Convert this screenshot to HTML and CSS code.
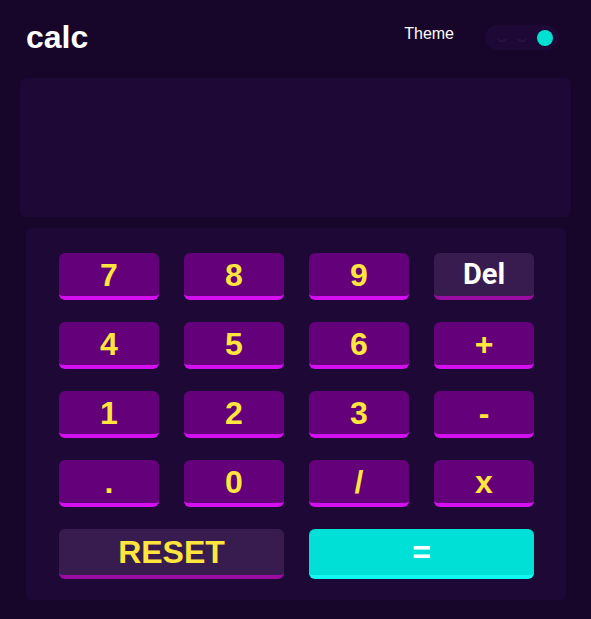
FILE: index.html
```html
<!DOCTYPE html>
<html lang="en">
<head>
<meta charset="utf-8">
<title>calc</title>
<link rel="stylesheet" href="styles.css">
</head>
<body>
<div class="app">
  <header class="header">
    <h1 class="logo">calc</h1>
    <div class="theme">
      <span class="theme-label">Theme</span>
      <div class="toggle">
        <svg class="marks" width="40" height="6" viewBox="0 0 40 6">
          <path d="M1 1 Q5 6 9 1 M21 1 Q25 6 29 1" fill="none" stroke="#35184f" stroke-width="1"/>
        </svg>
        <span class="knob"></span>
      </div>
    </div>
  </header>
  <div class="screen"></div>
  <div class="keypad">
    <button class="key">7</button>
    <button class="key">8</button>
    <button class="key">9</button>
    <button class="key key-alt">Del</button>
    <button class="key">4</button>
    <button class="key">5</button>
    <button class="key">6</button>
    <button class="key">+</button>
    <button class="key">1</button>
    <button class="key">2</button>
    <button class="key">3</button>
    <button class="key">-</button>
    <button class="key">.</button>
    <button class="key">0</button>
    <button class="key">/</button>
    <button class="key">x</button>
    <button class="key key-alt key-reset">RESET</button>
    <button class="key key-eq">=</button>
  </div>
</div>
</body>
</html>
```

FILE: styles.css
```css
* { box-sizing: border-box; }
html, body {
  margin: 0;
  background: #17062a;
  height: 100%;
}
body {
  font-family: "Liberation Sans", Arial, sans-serif;
}
.app {
  padding: 0 20px;
}
.header {
  display: flex;
  align-items: flex-start;
  justify-content: space-between;
  height: 78px;
  padding: 17px 12px 0 6px;
}
.logo {
  margin: 0;
  color: #ffffff;
  font-size: 32px;
  font-weight: 700;
  line-height: 40px;
}
.theme {
  display: flex;
  align-items: center;
  padding-top: 8px;
}
.theme-label {
  color: #ffffff;
  font-size: 16px;
  line-height: 16px;
  margin-right: 31px;
  margin-top: -8px;
}
.toggle {
  width: 74px;
  height: 25px;
  border-radius: 13px;
  background: #1e0936;
  display: flex;
  align-items: center;
  justify-content: space-between;
  padding: 0 6px 0 12px;
}
.marks { margin-top: 6px; }
.knob {
  width: 16px;
  height: 16px;
  border-radius: 50%;
  background: #00e0d1;
}
.screen {
  height: 139px;
  border-radius: 6px;
  background: #1e0936;
}
.keypad {
  margin: 11px 5px 0 6px;
  background: #1e0936;
  border-radius: 6px;
  padding: 25px 32px 21px 33px;
  display: grid;
  grid-template-columns: repeat(4, 100px);
  grid-template-rows: repeat(4, 47px) 50px;
  column-gap: 25px;
  row-gap: 22px;
}
.key {
  border: none;
  border-bottom: 4px solid #d40ff0;
  border-radius: 6px;
  background: #63007a;
  color: #ffe53d;
  font-family: "Liberation Sans", Arial, sans-serif;
  font-weight: 700;
  font-size: 32px;
  line-height: 1;
  padding: 0;
  margin: 0;
  cursor: pointer;
}
.key-alt {
  background: #381c4f;
  border-bottom-color: #9a0ca2;
  color: #ffffff;
  font-family: Roboto, "Liberation Sans", sans-serif;
  font-size: 29px;
}
.key-reset {
  grid-column: span 2;
  color: #ffe53d;
  font-family: "Liberation Sans", Arial, sans-serif;
  font-size: 32px;
}
.key-eq {
  grid-column: span 2;
  background: #00e0d6;
  border-bottom-color: #14f8f2;
  color: #ffffff;
}
```
